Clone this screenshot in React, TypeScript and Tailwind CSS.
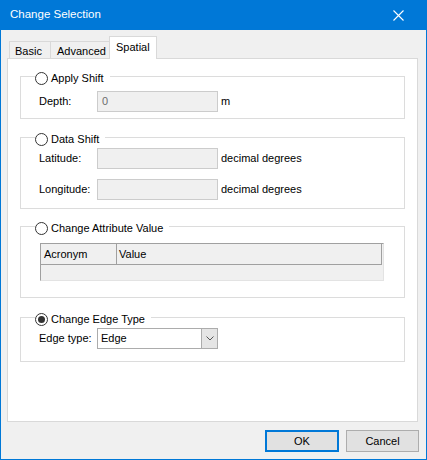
import React from "react";

const font = { fontFamily: '"Liberation Sans", Arial, sans-serif' };

function Radio({ checked }: { checked?: boolean }) {
  return (
    <span className="inline-flex w-[13px] h-[13px] rounded-full border border-[#333333] bg-white items-center justify-center shrink-0">
      {checked && <span className="w-[7px] h-[7px] rounded-full bg-[#333333]" />}
    </span>
  );
}

function Group({
  title,
  checked,
  className,
  children,
}: {
  title: string;
  checked?: boolean;
  className: string;
  children: React.ReactNode;
}) {
  return (
    <div className={"relative ml-[12px] w-[385px] border border-[#dcdcdc] " + className}>
      <div className="absolute -top-[5px] left-[14px] flex items-center gap-[3px] bg-white pr-[6px] pl-0 h-[13px]">
        <Radio checked={checked} />
        <span className="text-[11px] leading-none text-black">{title}</span>
      </div>
      {children}
    </div>
  );
}

function Field({ value }: { value?: string }) {
  return (
    <div className="w-[121px] h-[21px] shrink-0 border border-[#cccccc] bg-[#f0f0f0] text-[#6d6d6d] text-[11px] leading-[19px] pl-[4px]">
      {value}
    </div>
  );
}

function Label({ children }: { children: React.ReactNode }) {
  return <span className="w-[76px] shrink-0 pl-[18px] whitespace-nowrap">{children}</span>;
}

export default function App() {
  return (
    <div
      className="w-[427px] h-[460px] bg-[#0078d7] flex flex-col px-px pb-px text-[11px] text-black"
      style={font}
    >
      <div className="h-[30px] flex items-center justify-between pl-[9px] pr-[22px] shrink-0">
        <span className="text-white text-[11.5px]">Change Selection</span>
        <svg width="11" height="11" viewBox="0 0 11 11" className="text-white">
          <path d="M0.5 0.5 L10.5 10.5 M10.5 0.5 L0.5 10.5" stroke="currentColor" strokeWidth="1.1" />
        </svg>
      </div>
      <div className="flex-1 bg-[#f0f0f0] flex flex-col">
        <div className="flex items-end h-[23px] mt-[6px] pl-[8px] relative z-10 -mb-px">
          <div className="w-[42px] h-[18px] border border-b-0 border-[#d9d9d9] pl-[5px] leading-[18px]">Basic</div>
          <div className="w-[60px] h-[18px] -ml-px border border-b-0 border-[#d9d9d9] pl-[6px] leading-[18px]">Advanced</div>
          <div className="w-[48px] h-[23px] -ml-px border border-b-0 border-[#d9d9d9] bg-white pl-[6px] leading-[20px]">Spatial</div>
        </div>
        <div className="ml-[6px] w-[411px] h-[364px] border border-[#d9d9d9] bg-white flex flex-col">
          <Group title="Apply Shift" className="mt-[17px] h-[43px] pt-[14px]">
            <div className="flex items-center">
              <Label>Depth:</Label>
              <Field value="0" />
              <span className="ml-[3px]">m</span>
            </div>
          </Group>
          <Group title="Data Shift" className="mt-[18px] h-[72px] pt-[10px]">
            <div className="flex items-center">
              <Label>Latitude:</Label>
              <Field />
              <span className="ml-[3px]">decimal degrees</span>
            </div>
            <div className="flex items-center mt-[10px]">
              <Label>Longitude:</Label>
              <Field />
              <span className="ml-[3px]">decimal degrees</span>
            </div>
          </Group>
          <Group title="Change Attribute Value" className="mt-[17px] h-[72px] pt-[16px]">
            <div className="ml-[19px] w-[344px] h-[38px] border-t border-l border-[#a0a0a0] border-r border-b border-r-[#e3e3e3] border-b-[#e3e3e3] bg-[#f0f0f0]">
              <div className="flex h-[21px] border-b border-r border-[#a0a0a0] mr-px">
                <div className="w-[76px] border-r border-[#a0a0a0] pl-[3px] leading-[20px]">Acronym</div>
                <div className="pl-[2px] leading-[20px]">Value</div>
              </div>
            </div>
          </Group>
          <Group title="Change Edge Type" checked className="mt-[19px] h-[45px] pt-[10px]">
            <div className="flex items-center">
              <Label>Edge type:</Label>
              <div className="w-[121px] h-[21px] shrink-0 border border-[#acacac] bg-white flex">
                <span className="flex-1 pl-[3px] leading-[19px]">Edge</span>
                <div className="w-[16px] h-full border-l border-[#acacac] bg-[#e5e5e5] flex items-center justify-center">
                  <svg width="8" height="5" viewBox="0 0 8 5">
                    <path d="M0.5 0.5 L4 4 L7.5 0.5" fill="none" stroke="#555555" strokeWidth="1" />
                  </svg>
                </div>
              </div>
            </div>
          </Group>
        </div>
        <div className="flex justify-end gap-[7px] pr-[7px] mt-[8px]">
          <button className="w-[74px] h-[22px] border-2 border-[#0078d7] bg-[#e1e1e1] text-[11px]">OK</button>
          <button className="w-[73px] h-[22px] border border-[#adadad] bg-[#e1e1e1] text-[11px]">Cancel</button>
        </div>
      </div>
    </div>
  );
}
